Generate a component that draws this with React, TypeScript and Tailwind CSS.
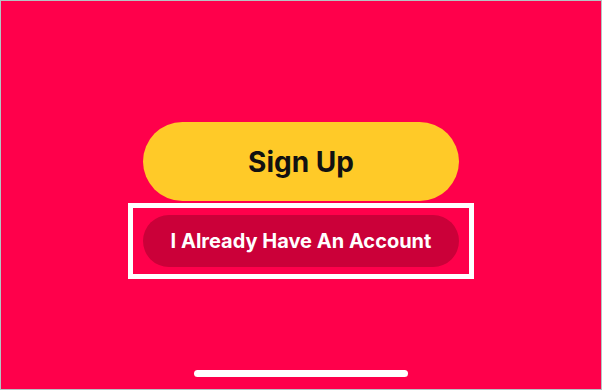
export default function App() {
  return (
    <div className="flex h-[390px] w-[602px] flex-col items-center border border-[#b5c3c3] bg-[#ff004b] pt-[121px] font-['Inter','Liberation_Sans',sans-serif]">
      {/* Primary action */}
      <button className="flex h-[79px] w-[316px] items-center justify-center rounded-full bg-[#ffca28] text-[28px] font-bold text-[#111111]">
        Sign Up
      </button>

      {/* Highlighted secondary action */}
      <div className="mt-[2px] flex h-[76px] w-[346px] items-center justify-center border-[5px] border-white">
        <button className="flex h-[52px] w-[316px] items-center justify-center rounded-full bg-[#cb0039] text-[20px] font-bold text-white">
          I Already Have An Account
        </button>
      </div>

      {/* Home indicator */}
      <div className="mt-auto mb-[12px] h-[7px] w-[214px] rounded-full bg-white" />
    </div>
  )
}
